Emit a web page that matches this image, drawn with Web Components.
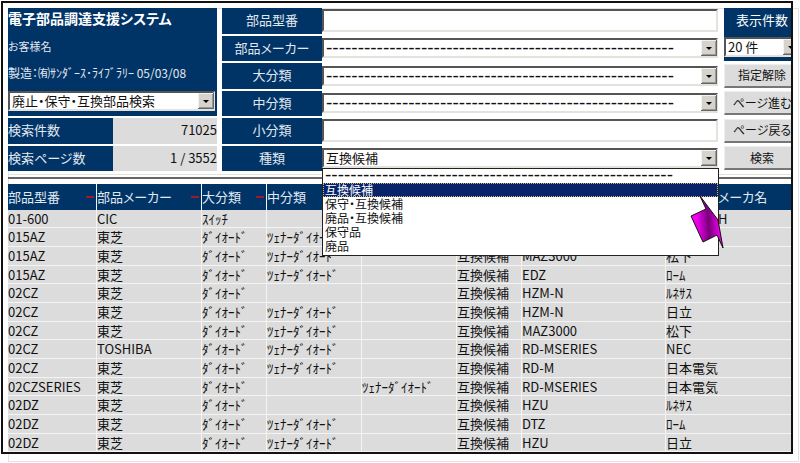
<!DOCTYPE html>
<html lang="ja">
<head>
<meta charset="utf-8">
<title>電子部品調達支援システム</title>
<style>
    html, body {
        margin: 0;
        height: 100%;
        background: #fff;
    }
    body {
        font: 13px/18px "Noto Sans CJK JP", "Liberation Sans", sans-serif;
        font-feature-settings: "palt";
        color: #111;
        --navy: #003366;
        --cell: #dcdcdc;
        --light: #e0e8f0;
    }
</style>
</head>
<body>
<app-frame>
    <search-header>
        <title-panel slot="title" heading="電子部品調達支援システム" customer="お客様名"
            maker="製造：㈲ｻﾝﾀﾞｰｽ･ﾗｲﾌﾞﾗﾘｰ 05/03/08" hits="71025" pages="1 / 3552"></title-panel>
        <search-field label="部品型番" type="text"></search-field>
        <search-field label="部品メーカー" type="select"></search-field>
        <search-field label="大分類" type="select"></search-field>
        <search-field label="中分類" type="select"></search-field>
        <search-field label="小分類" type="text"></search-field>
        <search-field label="種類" type="select" value="互換候補">
            <option-popup slot="popup" selected="1"></option-popup>
        </search-field>
        <side-buttons slot="side"></side-buttons>
    </search-header>
    <parts-table></parts-table>
</app-frame>

<script>
(function() {
    const DASHES = '-'.repeat(55);

    // classic raised arrow on the right of a sunken box
    const SELECT_CSS = `
        * { box-sizing: border-box; }
        select, input {
            display: block;
            width: 100%;
            margin: 0;
            border: 2px solid;
            border-color: #555 #e4e2dc #e4e2dc #555;
            border-radius: 0;
            background: #fff;
            color: #111;
            font: inherit;
            font-feature-settings: inherit;
            outline: 0;
        }
        input { height: 23px; padding: 0 3px; }
        select {
            appearance: none;
            height: 20px;
            padding: 0 18px 0 2px;
            line-height: 16px;
        }
        select.dashes { font-family: "Liberation Sans", sans-serif; font-size: 19px; }
        .combo { position: relative; }
        .combo svg {
            position: absolute;
            right: 1px;
            top: 2px;
            width: 16px;
            height: 16px;
            pointer-events: none;
        }
    `;
    const ARROW = `
        <svg viewBox="0 0 16 16" aria-hidden="true">
            <path d="M0 0h16v16H0z" fill="#666"/>
            <path d="M0 0h15v15H0z" fill="#f4f2ee"/>
            <path d="M1 1h14v14H1z" fill="#999"/>
            <path d="M1 1h13v13H1z" fill="#d6d3cc"/>
            <path d="M5 7h6L8 10z" fill="#000"/>
        </svg>
    `;

    function attach(el, html) {
        let tmpl = document.createElement('template');
        tmpl.innerHTML = html;
        el.attachShadow({ mode: 'open' }).appendChild(tmpl.content.cloneNode(true));
    }

    class AppFrame extends HTMLElement {
        constructor() {
            super();
            attach(this, `
                <style>
                    :host {
                        display: block;
                        position: relative;
                        box-sizing: border-box;
                        height: 100%;
                        padding: 1px 7px 9px 1px;
                    }
                    /* thin page edge showing behind the window border */
                    :host::before {
                        content: "";
                        position: absolute;
                        inset: 8px 1px 1px 8px;
                        border: 1px solid #e2e2e2;
                    }
                    .window {
                        position: relative;
                        box-sizing: border-box;
                        height: 100%;
                        border: 2px solid #111;
                        padding: 5px 0 0 5px;
                        overflow: hidden;
                    }
                    .page { margin-right: -9px; }
                </style>
                <div class="window"><div class="page"><slot></slot></div></div>
            `);
        }
    }

    class SearchHeader extends HTMLElement {
        constructor() {
            super();
            attach(this, `
                <style>
                    :host {
                        display: grid;
                        grid-template-columns: 209px 1fr 76px;
                        gap: 5px;
                        height: 163px;
                    }
                    .fields { display: grid; grid-auto-rows: 1fr; gap: 2px; }
                </style>
                <slot name="title"></slot>
                <div class="fields"><slot></slot></div>
                <slot name="side"></slot>
            `);
        }
    }

    class TitlePanel extends HTMLElement {
        constructor() {
            super();
            let get = name => this.getAttribute(name);
            attach(this, `
                <style>
                    ${SELECT_CSS}
                    :host {
                        display: grid;
                        grid-template-columns: 105px 1fr;
                        grid-template-rows: repeat(6, 1fr);
                        row-gap: 2px;
                        color: var(--light);
                    }
                    .top {
                        grid-area: 1 / 1 / 5 / 3;
                        background: var(--navy);
                    }
                    h1 { margin: 1px 0 10px; font-size: 14px; line-height: 18px; color: #fff; }
                    p { margin: 0 0 9px; font-size: 11px; line-height: 18px; }
                    p.maker { font-size: 12px; white-space: nowrap; }
                    .combo { margin: 2px 2px 0 0; }
                    .name { background: var(--navy); line-height: 24px; }
                    .value { background: var(--cell); color: #111; line-height: 24px; text-align: right; }
                </style>
                <div class="top">
                    <h1>${get('heading')}</h1>
                    <p>${get('customer')}</p>
                    <p class="maker">${get('maker')}</p>
                    <div class="combo">
                        <select aria-label="検索メニュー"><option>廃止・保守・互換部品検索</option></select>
                        ${ARROW}
                    </div>
                </div>
                <div class="name">検索件数</div><div class="value">${get('hits')}</div>
                <div class="name">検索ページ数</div><div class="value">${get('pages')}</div>
            `);
        }
    }

    class SearchField extends HTMLElement {
        constructor() {
            super();
            let value = this.getAttribute('value');
            let control = '<input type="text" id="field">';
            if (this.getAttribute('type') === 'select') {
                control = `
                    <select id="field" class="${value ? '' : 'dashes'}"><option>${value || DASHES}</option></select>
                    ${ARROW}
                `;
            }
            attach(this, `
                <style>
                    ${SELECT_CSS}
                    :host {
                        display: grid;
                        grid-template-columns: 100px 1fr;
                        align-items: center;
                    }
                    label {
                        align-self: stretch;
                        background: var(--navy);
                        color: var(--light);
                        text-align: center;
                        line-height: 24px;
                    }
                    .combo { margin-right: 1px; }
                </style>
                <label for="field">${this.getAttribute('label')}</label>
                <div class="combo">${control}<slot name="popup"></slot></div>
            `);
        }
    }

    class OptionPopup extends HTMLElement {
        constructor() {
            super();
            let selected = Number(this.getAttribute('selected'));
            let items = [DASHES, '互換候補', '保守・互換候補', '廃品・互換候補', '保守品', '廃品'];
            attach(this, `
                <style>
                    :host {
                        position: absolute;
                        z-index: 2;
                        top: 100%;
                        left: 0;
                        right: -1px;
                    }
                    ul {
                        margin: 0;
                        padding: 0 0 2px;
                        border: 1px solid #222;
                        background: #fff;
                        list-style: none;
                    }
                    li { height: 14px; padding-left: 2px; font-size: 12px; line-height: 14px; }
                    li.dashes { font-family: "Liberation Sans", sans-serif; font-size: 19px; line-height: 11px; }
                    li[aria-selected="true"] {
                        background: #0a246a;
                        color: #fff;
                        outline: 1px dotted #c8b878;
                        outline-offset: -1px;
                    }
                    svg {
                        position: absolute;
                        top: 26px;
                        right: -6px;
                        width: 36px;
                        height: 56px;
                    }
                </style>
                <ul role="listbox" aria-label="種類">
                    ${items.map((text, i) => `<li role="option" class="${i ? '' : 'dashes'}" aria-selected="${i === selected}">${text}</li>`).join('')}
                </ul>
                <svg viewBox="0 0 36 56" aria-hidden="true">
                    <defs>
                        <linearGradient id="shade" x1="0" y1="0.1" x2="1" y2="0">
                            <stop offset="0" stop-color="#ff00ff"/>
                            <stop offset="0.2" stop-color="#e000e0"/>
                            <stop offset="0.5" stop-color="#780078"/>
                            <stop offset="0.85" stop-color="#f000f0"/>
                            <stop offset="1" stop-color="#ff00ff"/>
                        </linearGradient>
                    </defs>
                    <path d="M11 2L29 26L34 54L28 41L14 48L2 22L17 15Z" fill="url(#shade)" stroke="#111"/>
                </svg>
            `);
        }
    }

    class SideButtons extends HTMLElement {
        constructor() {
            super();
            attach(this, `
                <style>
                    ${SELECT_CSS}
                    :host { display: grid; grid-template-rows: repeat(6, 1fr); row-gap: 2px; }
                    .count { grid-row: 1 / 3; background: var(--navy); color: #fff; }
                    label { display: block; height: 29px; text-align: center; line-height: 24px; }
                    button {
                        align-self: center;
                        height: 24px;
                        padding: 0;
                        border: 1px solid;
                        border-color: #eee #eee #777 #eee;
                        border-bottom-width: 2px;
                        background: var(--cell);
                        color: #111;
                        font: inherit;
                        font-size: 12px;
                        font-feature-settings: inherit;
                    }
                </style>
                <div class="count">
                    <label for="count">表示件数</label>
                    <div class="combo"><select id="count"><option>20 件</option></select>${ARROW}</div>
                </div>
                <button type="button">指定解除</button>
                <button type="button">ページ進む</button>
                <button type="button">ページ戻る</button>
                <button type="button">検索</button>
            `);
        }
    }

    const DIODE = 'ﾀﾞｲｵｰﾄﾞ';
    const ZENER = 'ﾂｪﾅｰﾀﾞｲｵｰﾄﾞ';
    const ROWS = [
        ['01-600', 'CIC', 'ｽｲｯﾁ', '', '', '', '', 'H'],
        ['015AZ', '東芝', DIODE, ZENER, '', '', '', ''],
        ['015AZ', '東芝', DIODE, ZENER, '', '互換候補', 'MAZ3000', '松下'],
        ['015AZ', '東芝', DIODE, ZENER, '', '互換候補', 'EDZ', 'ﾛｰﾑ'],
        ['02CZ', '東芝', DIODE, '', '', '互換候補', 'HZM-N', 'ﾙﾈｻｽ'],
        ['02CZ', '東芝', DIODE, ZENER, '', '互換候補', 'HZM-N', '日立'],
        ['02CZ', '東芝', DIODE, ZENER, '', '互換候補', 'MAZ3000', '松下'],
        ['02CZ', 'TOSHIBA', DIODE, ZENER, '', '互換候補', 'RD-MSERIES', 'NEC'],
        ['02CZ', '東芝', DIODE, ZENER, '', '互換候補', 'RD-M', '日本電気'],
        ['02CZSERIES', '東芝', DIODE, '', ZENER, '互換候補', 'RD-MSERIES', '日本電気'],
        ['02DZ', '東芝', DIODE, '', '', '互換候補', 'HZU', 'ﾙﾈｻｽ'],
        ['02DZ', '東芝', DIODE, ZENER, '', '互換候補', 'DTZ', 'ﾛｰﾑ'],
        ['02DZ', '東芝', DIODE, ZENER, '', '互換候補', 'HZU', '日立']
    ];

    class PartsTable extends HTMLElement {
        constructor() {
            super();
            attach(this, `
                <style>
                    :host {
                        display: block;
                        margin-top: 3px;
                        padding-top: 2px;
                        border-top: 1px solid #e4e2dc;
                    }
                    .rule { height: 2px; margin-bottom: 5px; background: #666; }
                    table { width: 100%; table-layout: fixed; border-collapse: separate; border-spacing: 0; }
                    th, td {
                        padding: 0;
                        border-right: 1px solid #f4f4f4;
                        text-align: left;
                        font-weight: normal;
                        white-space: nowrap;
                    }
                    th { height: 26px; background: var(--navy); color: var(--light); line-height: 24px; }
                    th.sort::after {
                        content: "";
                        float: right;
                        width: 8px;
                        height: 2px;
                        margin: 11px 2px 0 0;
                        background: #a0182c;
                    }
                    td { height: 18px; border-bottom: 1px solid #f4f4f4; background: var(--cell); line-height: 16px; }
                    tr:nth-child(3n+1) td { height: 17px; }
                    /* the last column runs on from under the open list */
                    th:last-child, tr:first-child td:last-child { text-indent: 52px; }
                </style>
                <div class="rule"></div>
                <table>
                    <colgroup>
                        <col width="89"><col width="105"><col width="65"><col width="95">
                        <col width="95"><col width="65"><col width="144"><col>
                    </colgroup>
                    <thead>
                        <tr>
                            <th class="sort">部品型番</th><th class="sort">部品メーカー</th><th class="sort">大分類</th>
                            <th>中分類</th><th></th><th></th><th></th><th>メーカ名</th>
                        </tr>
                    </thead>
                    <tbody>
                        ${ROWS.map(row => `<tr>${row.map(text => `<td>${text}</td>`).join('')}</tr>`).join('')}
                    </tbody>
                </table>
            `);
        }
    }

    customElements.define('app-frame', AppFrame);
    customElements.define('search-header', SearchHeader);
    customElements.define('title-panel', TitlePanel);
    customElements.define('search-field', SearchField);
    customElements.define('option-popup', OptionPopup);
    customElements.define('side-buttons', SideButtons);
    customElements.define('parts-table', PartsTable);
})();
</script>
</body>
</html>
